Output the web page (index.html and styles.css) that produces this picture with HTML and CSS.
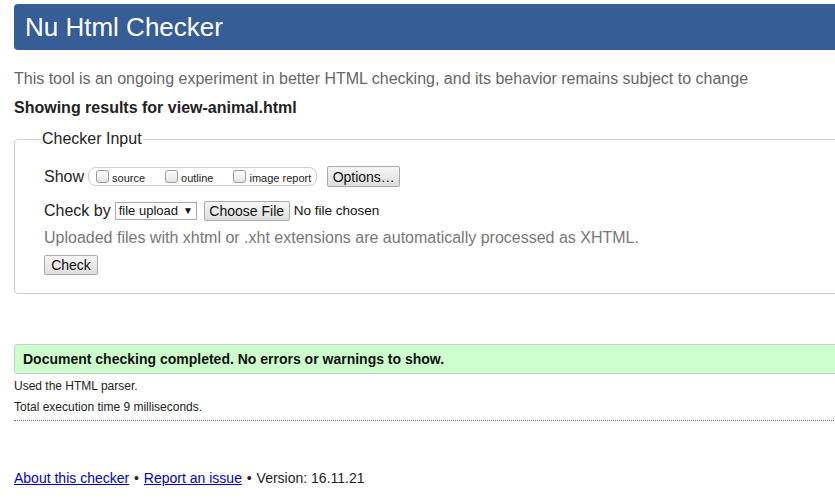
FILE: index.html
```html
<!DOCTYPE html>
<html>
<head>
<meta charset="utf-8">
<title>Nu Html Checker</title>
<link rel="stylesheet" href="styles.css">
</head>
<body>
<div class="page">
  <h1 class="title">Nu Html Checker</h1>
  <p class="intro">This tool is an ongoing experiment in better HTML checking, and its behavior remains subject to change</p>
  <p class="showing">Showing results for view-animal.html</p>

  <fieldset class="input">
    <legend class="legend">Checker Input</legend>
    <div class="row row-show">
      <span class="label">Show</span>
      <span class="opts">
        <span class="opt"><span class="cb"></span>source</span>
        <span class="opt"><span class="cb"></span>outline</span>
        <span class="opt"><span class="cb"></span>image report</span>
      </span>
      <span class="btn btn-options">Options…</span>
    </div>
    <div class="row row-by">
      <span class="label">Check by</span>
      <span class="select">file upload <span class="arrow">▼</span></span>
      <span class="btn btn-file">Choose File</span>
      <span class="nofile">No file chosen</span>
    </div>
    <div class="row hint">Uploaded files with xhtml or .xht extensions are automatically processed as XHTML.</div>
    <div class="row row-check"><span class="btn btn-check">Check</span></div>
  </fieldset>

  <div class="success">Document checking completed. No errors or warnings to show.</div>
  <p class="details">Used the HTML parser.</p>
  <p class="details">Total execution time 9 milliseconds.</p>
  <div class="rule"></div>

  <p class="footer"><a href="#">About this checker</a> <span class="sep">•</span> <a href="#">Report an issue</a> <span class="sep">•</span> Version: 16.11.21</p>
</div>
</body>
</html>
```
FILE: styles.css
```css
html, body {
  margin: 0;
  padding: 0;
  overflow: hidden;
  background: #fff;
}
body {
  font-family: "Liberation Sans", Arial, sans-serif;
  color: #222;
}
.page {
  width: 860px;
  padding: 4px 0 0 14px;
}
.title {
  margin: 0;
  height: 46px;
  line-height: 46px;
  padding-left: 11px;
  background: #365d95;
  color: #fff;
  font-size: 26px;
  font-weight: normal;
  border-radius: 4px;
}
.intro {
  margin: 20px 0 0;
  font-size: 16px;
  line-height: 18px;
  color: #666;
}
.showing {
  margin: 11px 0 0;
  font-size: 16px;
  line-height: 18px;
  font-weight: bold;
  color: #222;
}
.input {
  margin: 13px 0 0;
  padding: 16px 0 18px 29px;
  border: 1px solid #ccc;
  border-radius: 4px;
  min-width: 0;
}
.legend {
  margin-left: -3px;
  padding: 0 1px;
  font-size: 16px;
  line-height: 18px;
  color: #222;
}
.row {
  display: flex;
  align-items: center;
}
.label {
  font-size: 16px;
  color: #222;
}
.row-show {
  height: 21px;
  margin-top: 2px;
}
.opts {
  display: flex;
  align-items: center;
  height: 17px;
  margin-left: 4px;
  padding: 0 5px 0 7px;
  border: 1px solid #ccc;
  border-radius: 8px;
  font-size: 11px;
  color: #222;
}
.opt {
  display: flex;
  align-items: center;
  margin-right: 20px;
  padding-top: 2px;
}
.opt:last-child {
  margin-right: 0;
}
.cb {
  display: inline-block;
  width: 11px;
  height: 11px;
  margin: -3px 3px 0 0;
  border: 1px solid #999;
  border-radius: 3px;
  background: linear-gradient(#fff, #e3e3e3);
}
.btn {
  display: inline-flex;
  align-items: center;
  justify-content: center;
  box-sizing: border-box;
  border: 1px solid #a9a9a9;
  border-radius: 2px;
  background: linear-gradient(#f6f6f6, #dedede);
  font-size: 14px;
  color: #111;
}
.btn-options {
  margin-left: 10px;
  width: 73px;
  height: 21px;
}
.row-by {
  height: 21px;
  margin-top: 13px;
}
.select {
  display: inline-flex;
  align-items: center;
  box-sizing: border-box;
  height: 18px;
  width: 82px;
  margin-left: 4px;
  padding-left: 3px;
  border: 1px solid #a9a9a9;
  font-size: 13px;
  color: #111;
  background: #fff;
}
.arrow {
  font-size: 10px;
  margin-left: 5px;
}
.btn-file {
  margin-left: 7px;
  width: 86px;
  height: 20px;
}
.nofile {
  margin-left: 4px;
  font-size: 13.5px;
  color: #111;
}
.hint {
  margin-top: 8px;
  height: 18px;
  font-size: 16px;
  color: #777;
}
.row-check {
  margin-top: 8px;
}
.btn-check {
  width: 54px;
  height: 20px;
}
.success {
  margin-top: 50px;
  box-sizing: border-box;
  height: 30px;
  line-height: 28px;
  padding-left: 8px;
  background: #ccffcc;
  border: 1px solid #ccc;
  border-radius: 3px;
  font-size: 14px;
  font-weight: bold;
  color: #111;
}
.details {
  margin: 0;
  height: 21px;
  line-height: 21px;
  font-size: 12px;
  color: #222;
}
.success + .details {
  margin-top: 2px;
}
.rule {
  margin-top: 2px;
  border-top: 1px dotted #666;
}
.footer {
  margin: 48px 0 0;
  font-size: 14px;
  line-height: 18px;
  color: #222;
}
.footer a {
  color: #00c;
}
.sep {
  margin: 0 1px;
}
```
